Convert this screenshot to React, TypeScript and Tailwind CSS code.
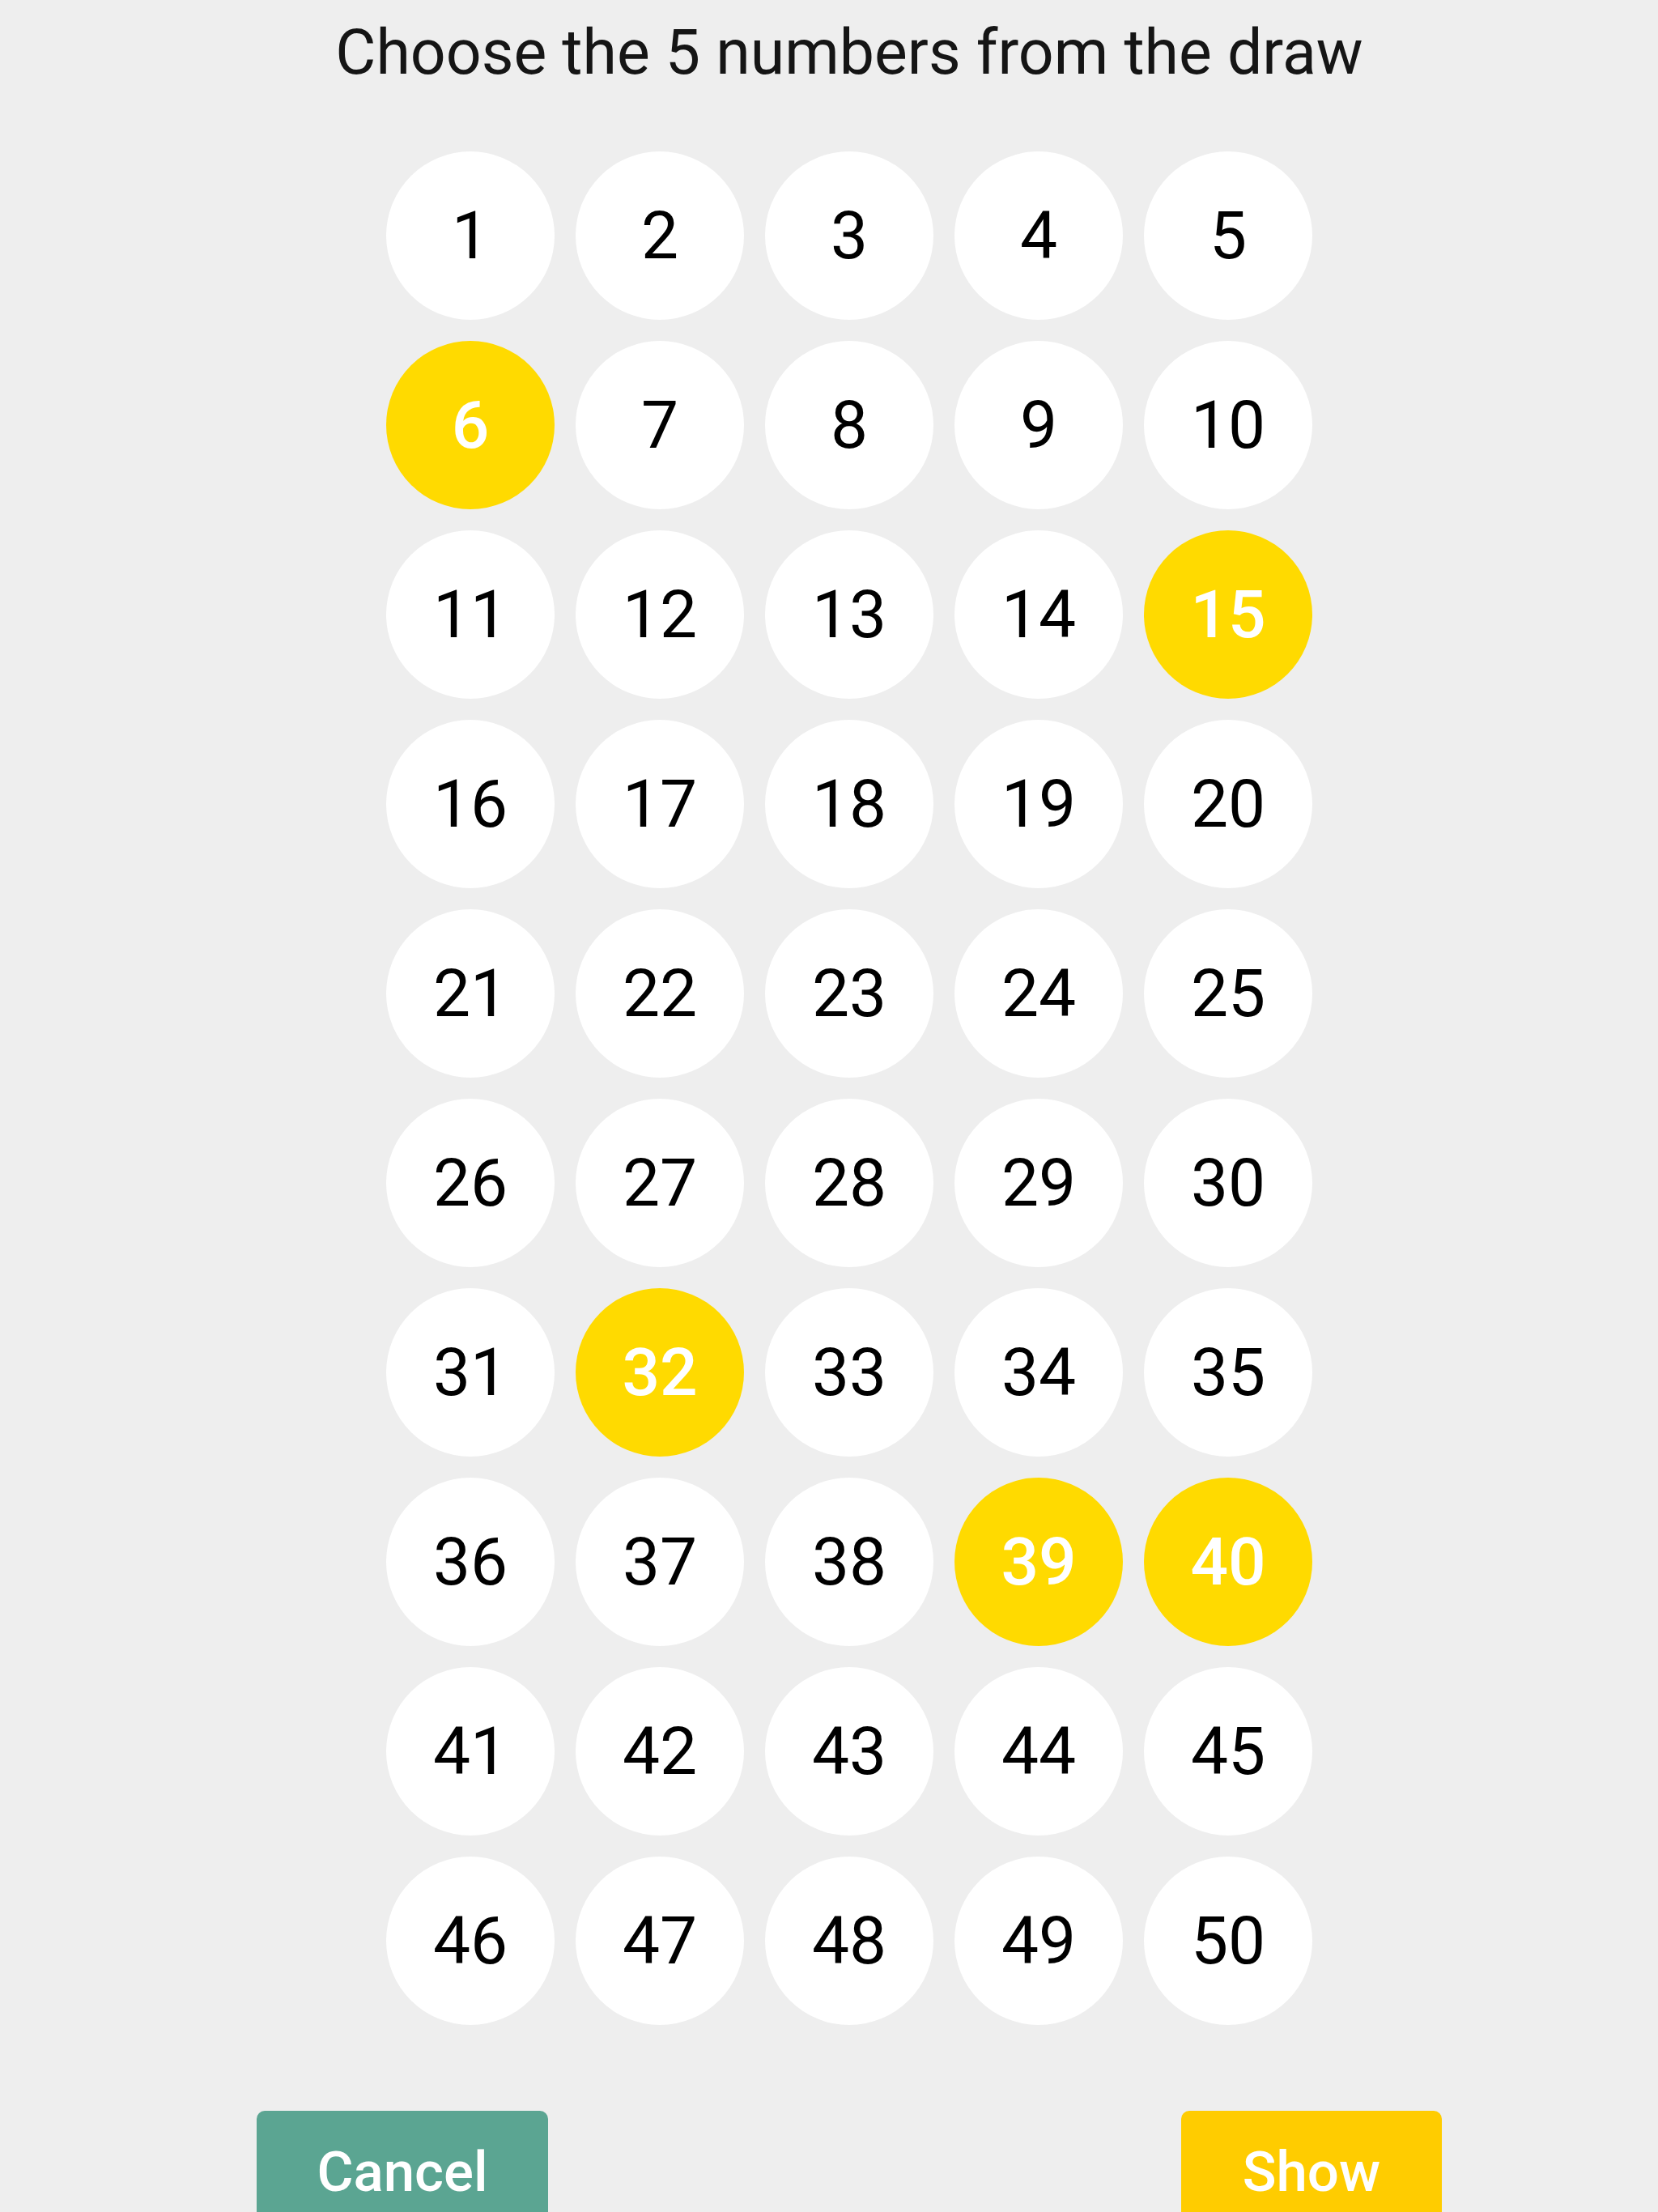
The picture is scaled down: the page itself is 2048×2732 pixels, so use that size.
import React from "react";

const selected = new Set([6, 15, 32, 39, 40]);

export default function App() {
  const nums = Array.from({ length: 50 }, (_, i) => i + 1);
  return (
    <div
      className="h-[2732px] overflow-hidden bg-[#eeeeee] pl-[50px]"
      style={{ fontFamily: "Roboto, 'Noto Sans', sans-serif" }}
    >
      <div className="pt-[27px] text-center text-[77px] leading-[77px] text-[#151515]">
        Choose the 5 numbers from the draw
      </div>
      <div className="mt-[83px] grid grid-cols-[repeat(5,208px)] justify-center gap-[26px]">
        {nums.map((n) => {
          const on = selected.has(n);
          return (
            <div
              key={n}
              className={
                on
                  ? "flex h-[208px] w-[208px] items-center justify-center rounded-full bg-[#ffda00] text-[82px] leading-none font-medium text-white"
                  : "flex h-[208px] w-[208px] items-center justify-center rounded-full bg-white text-[82px] leading-none text-black"
              }
            >
              {n}
            </div>
          );
        })}
      </div>
      <div className="mt-[106px] flex justify-between px-[267px]">
        <button className="flex h-[150px] w-[360px] items-center justify-center rounded-[10px] bg-[#5ba592] text-[69px] leading-none font-medium text-white">
          Cancel
        </button>
        <button className="flex h-[150px] w-[322px] items-center justify-center rounded-[10px] bg-[#ffcc00] text-[69px] leading-none font-medium text-white">
          Show
        </button>
      </div>
    </div>
  );
}
